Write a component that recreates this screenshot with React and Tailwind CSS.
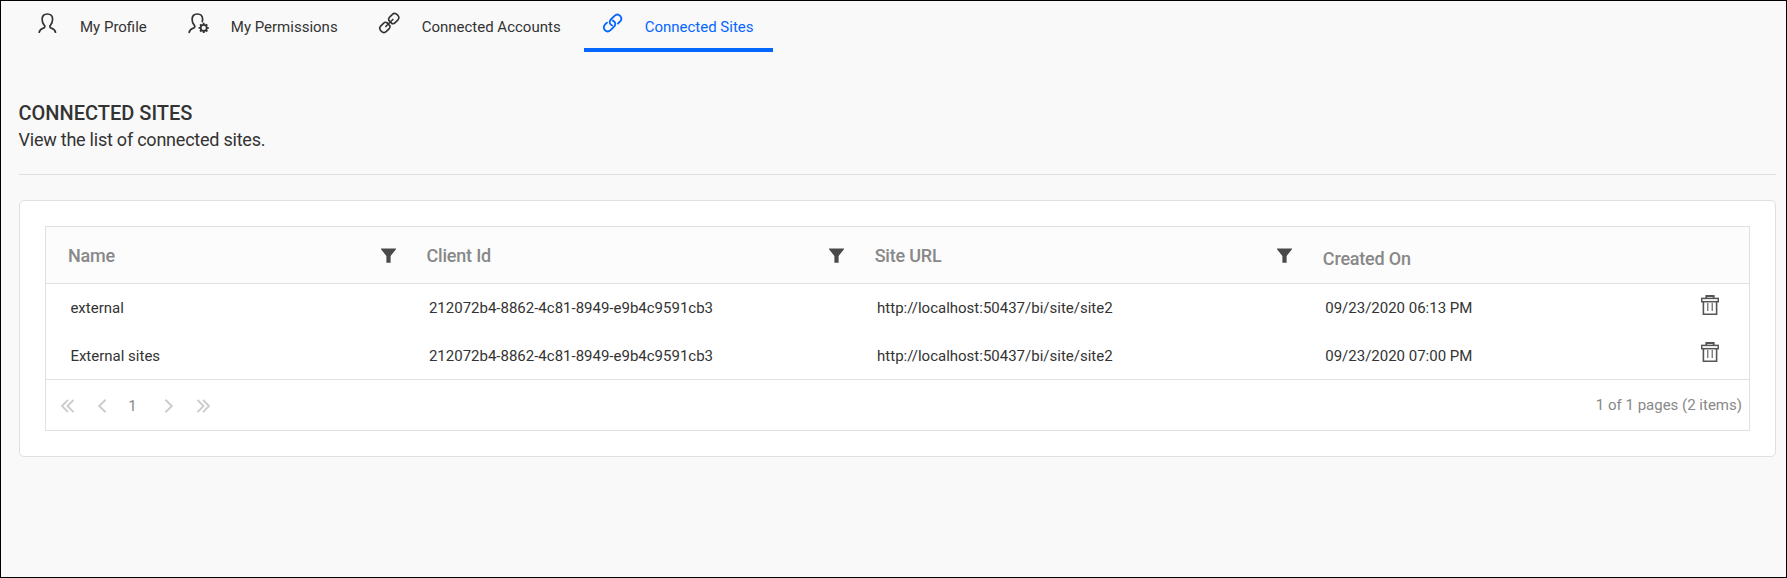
const stroke = {
  fill: 'none',
  stroke: 'currentColor',
  strokeLinecap: 'round',
  strokeLinejoin: 'round',
};

function ProfileIcon() {
  return (
    <svg className="h-5 w-5" viewBox="0 0 20 20" strokeWidth="1.7" {...stroke}>
      <path d="M1.2 19.3C1.6 16.4 3.6 15.9 5.6 15.1C7.3 14.4 7 13 6.2 12.1C4.8 10.6 4.1 9 4.1 6.3C4.1 2.9 6.2 1 9.3 1S14.6 2.9 14.6 6.3C14.6 9 13.9 10.6 12.5 12.1C11.7 13 11.4 14.4 13.1 15.1C15.1 15.9 17.1 16.4 17.5 19.3" />
    </svg>
  );
}

function PermissionsIcon() {
  return (
    <svg className="h-5 w-5 overflow-visible" viewBox="0 0 20 20" strokeWidth="1.7" {...stroke}>
      <path d="M0.2 19.3C0.6 16.4 2.6 15.9 4.6 15.1C6.3 14.4 6 13 5.2 12.1C3.8 10.6 3.1 9 3.1 6.3C3.1 2.9 5.2 1 8.3 1S13.6 2.9 13.6 6.3C13.6 7.2 13.5 7.9 13.3 8.6" />
      <circle cx="14.7" cy="14.9" r="3" strokeWidth="1.7" />
      <path
        strokeLinecap="butt"
        strokeWidth="1.9"
        d="M14.7 12V9.8M14.7 17.8V20M11.8 14.9H9.6M17.6 14.9H19.8M12.65 12.85L11.1 11.3M16.75 16.95L18.3 18.5M16.75 12.85L18.3 11.3M12.65 16.95L11.1 18.5"
      />
    </svg>
  );
}

function AccountsIcon() {
  return (
    <svg className="h-5 w-5 overflow-visible" viewBox="0 0 20 20" strokeWidth="1.6" {...stroke}>
      <g transform="translate(9.3 10) rotate(-45)">
        <path d="M-1.5 -2C-1.8 -3.2 -2.7 -3.9 -4 -3.9H-8C-10.2 -3.9 -11.5 -2.4 -11.5 0S-10.2 3.9 -8 3.9H-4C-2.7 3.9 -1.8 3.2 -1.5 2" />
        <path d="M1.5 -2C1.8 -3.2 2.7 -3.9 4 -3.9H8C10.2 -3.9 11.5 -2.4 11.5 0S10.2 3.9 8 3.9H4C2.7 3.9 1.8 3.2 1.5 2" />
        <path d="M-1.5 -2V2M1.5 -2V2M-5 0H5" />
      </g>
    </svg>
  );
}

function SitesIcon() {
  return (
    <svg className="h-5 w-5" viewBox="0 0 20 20" strokeWidth="1.8" {...stroke}>
      <path d="M9.2 12.5C6.5 11.4 5.9 8.5 7.9 6.5L11.5 2.9C13.2 1.3 15.6 1.4 17.1 2.9C18.6 4.5 18.6 6.8 17.1 8.4L15 10.5" />
      <path d="M9.8 7.6C12.5 8.7 13.1 11.6 11.1 13.6L7.5 17.2C5.8 18.8 3.4 18.7 1.9 17.2C0.6 15.6 0.6 13.3 1.9 11.7L4 9.6" />
    </svg>
  );
}

function FilterIcon() {
  return (
    <svg className="h-[15px] w-[15px]" viewBox="0 0 15 15" fill="currentColor">
      <path d="M0 0.4H15V1.3L9.6 7.9V14.8H5.4V7.9L0 1.3Z" />
    </svg>
  );
}

function TrashIcon() {
  return (
    <svg className="h-5 w-[18px]" viewBox="0 0 18 20" fill="none" stroke="currentColor">
      <path strokeWidth="1.8" d="M5.3 3V1H12.7V3" />
      <rect x="0.7" y="3.4" width="16.6" height="3.3" strokeWidth="1.5" />
      <path strokeWidth="1.6" d="M2.4 7V19.2H15.6V7" />
      <path strokeWidth="1.1" d="M6.8 8V16M11.2 8V16" />
    </svg>
  );
}

function Chevrons({ d, className }) {
  return (
    <svg className={className} viewBox="0 0 13 14" strokeWidth="1.9" fill="none" stroke="currentColor">
      <path d={d} />
    </svg>
  );
}

const tabs = [
  { label: 'My Profile', Icon: ProfileIcon },
  { label: 'My Permissions', Icon: PermissionsIcon },
  { label: 'Connected Accounts', Icon: AccountsIcon },
  { label: 'Connected Sites', Icon: SitesIcon, active: true },
];

const clientId = '212072b4-8862-4c81-8949-e9b4c9591cb3';
const url = 'http://localhost:50437/bi/site/site2';
const rows = [
  ['external', clientId, url, '09/23/2020 06:13 PM'],
  ['External sites', clientId, url, '09/23/2020 07:00 PM'],
];

const columns = 'grid grid-cols-[4fr_5fr_5fr_4fr_1fr]';

export default function App() {
  return (
    <div className="h-[578px] w-full border border-black bg-[#f9f9f9] font-[Roboto,sans-serif] text-[15px] leading-5 text-[#333]">
      <nav className="flex h-[51px] gap-1 pl-[18px]">
        {tabs.map(({ label, Icon, active }) => (
          <a
            key={label}
            className={
              active
                ? 'flex items-start border-b-4 border-[#0565ff] pt-4 pr-[19px] pl-[19px] text-[#0565ff]'
                : 'flex items-start pt-4 pr-[19px] pl-[19px]'
            }
          >
            <span className="-mt-1 mr-[22px]">
              <Icon />
            </span>
            <span className="whitespace-nowrap">{label}</span>
          </a>
        ))}
      </nav>

      <main className="pr-[10px] pl-[18px]">
        <header className="border-b border-[#e0e0e0] pt-[48px] pb-[21px]">
          <h1 className="-ml-[0.5px] text-[20px] leading-[26px] font-medium">CONNECTED SITES</h1>
          <p className="-ml-[0.5px] text-[18px] leading-[27px] tracking-[-0.23px]">View the list of connected sites.</p>
        </header>

        <section className="mt-[25px] h-[257px] rounded-[5px] border border-[#e0e0e0] bg-white p-[25px]">
          <div className="border border-[#e0e0e0]">
            <div className={`${columns} h-[57px] border-b border-[#e0e0e0] bg-[#fcfcfc] text-[18px] leading-6 font-medium tracking-[-0.2px] text-[#888]`}>
              {['Name', 'Client Id', 'Site URL'].map((title) => (
                <div key={title} className="flex items-start justify-between pt-[17px] pr-[8.5px] pl-[22px]">
                  <span>{title}</span>
                  <span className="pt-1 text-[#4a4a4a]">
                    <FilterIcon />
                  </span>
                </div>
              ))}
              <div className="pt-5 pl-[22px]">Created On</div>
            </div>

            <div className="h-[96px] border-b border-[#e0e0e0]">
              {rows.map((row, i) => (
                <div key={row[0]} className={`${columns} h-12`}>
                  {row.map((value) => (
                    <div key={value} className="pt-[14px] pl-[24.4px]">
                      {value}
                    </div>
                  ))}
                  <div className={i ? 'flex items-start justify-end pt-[10px] pr-[30px] text-[#555]' : 'flex items-start justify-end pt-[11px] pr-[30px] text-[#555]'}>
                    <TrashIcon />
                  </div>
                </div>
              ))}
            </div>

            <div className="flex h-[50px] items-start justify-between pt-[15px] pr-[7px] pl-[15px] text-[#888]">
              <div className="flex items-start pt-px">
                <Chevrons className="mt-[3px] h-[14px] w-[13px] text-[#ccc]" d="M7 0.8L1 7L7 13.2M12.5 0.8L6.5 7L12.5 13.2" />
                <Chevrons className="mt-[3px] ml-6 h-[14px] w-[13px] text-[#ccc]" d="M7.6 0.8L1.2 7L7.6 13.2" />
                <span className="ml-[17px] w-[9px] text-center">1</span>
                <Chevrons className="mt-[3px] ml-[27px] h-[14px] w-[13px] text-[#ccc]" d="M1.4 0.8L7.8 7L1.4 13.2" />
                <Chevrons className="mt-[3px] ml-5 h-[14px] w-[13px] text-[#ccc]" d="M0.5 0.8L6.5 7L0.5 13.2M6 0.8L12 7L6 13.2" />
              </div>
              <span>1 of 1 pages (2 items)</span>
            </div>
          </div>
        </section>
      </main>
    </div>
  );
}
